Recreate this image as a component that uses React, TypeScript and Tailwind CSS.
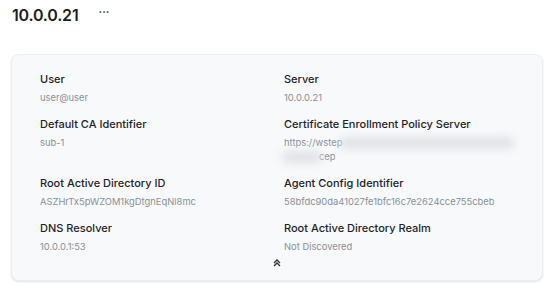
import React from "react";

interface Field {
  label: string;
  value: React.ReactNode;
}

const Blur: React.FC<{ className: string }> = ({ className }) => (
  <span
    className={`inline-block h-[12px] rounded-full bg-[#dfe2e6] blur-[4px] align-middle ${className}`}
  />
);

const fields: Field[] = [
  { label: "User", value: "user@user" },
  { label: "Server", value: "10.0.0.21" },
  { label: "Default CA Identifier", value: "sub-1" },
  {
    label: "Certificate Enrollment Policy Server",
    value: (
      <>
        <span className="flex items-center">
          https://wstep
          <Blur className="ml-[-2px] w-[175px]" />
        </span>
        <span className="flex items-center">
          <Blur className="ml-[-2px] w-[40px]" />
          <span className="ml-[-3px]">cep</span>
        </span>
      </>
    ),
  },
  { label: "Root Active Directory ID", value: "ASZHrTx5pWZOM1kgDtgnEqNl8mc" },
  { label: "Agent Config Identifier", value: "58bfdc90da41027fe1bfc16c7e2624cce755cbeb" },
  { label: "DNS Resolver", value: "10.0.0.1:53" },
  { label: "Root Active Directory Realm", value: "Not Discovered" },
];

const InfoCell: React.FC<Field> = ({ label, value }) => (
  <div className="flex flex-col gap-[5px]">
    <div className="text-[11px] leading-[14px] font-medium text-[#1f2328]">{label}</div>
    <div className="flex flex-col text-[9.4px] leading-[14px] text-[#8b9098]">{value}</div>
  </div>
);

export default function App() {
  return (
    <div className="h-[290px] w-[550px] bg-white font-['Inter',sans-serif]">
      <div className="flex items-center px-[12px] pt-[5px]">
        <h1 className="text-[16px] leading-[20px] font-semibold tracking-[-0.2px] text-[#1a1c1f]">
          10.0.0.21
        </h1>
        <span className="ml-[20px] mt-[-6px] text-[11px] font-bold text-[#3a3d42]">···</span>
      </div>

      <div className="mx-[11px] mt-[29px] w-[532px] rounded-[8px] border border-[#eceef1] bg-[#f8f9fa] px-[28px] pt-[17px] pb-[13px] shadow-[0_1px_2px_rgba(0,0,0,0.12)]">
        <div className="grid grid-cols-2 gap-x-[14px] gap-y-[12px]">
          {fields.map((f) => (
            <InfoCell key={f.label} label={f.label} value={f.value} />
          ))}
        </div>
        <div className="mt-[5px] flex justify-center">
          <svg width="8" height="8" viewBox="0 0 8 8" fill="none" stroke="#2b2e33" strokeWidth="1.3">
            <path d="M1 4 L4 1 L7 4" />
            <path d="M1 7 L4 4 L7 7" />
          </svg>
        </div>
      </div>
    </div>
  );
}
